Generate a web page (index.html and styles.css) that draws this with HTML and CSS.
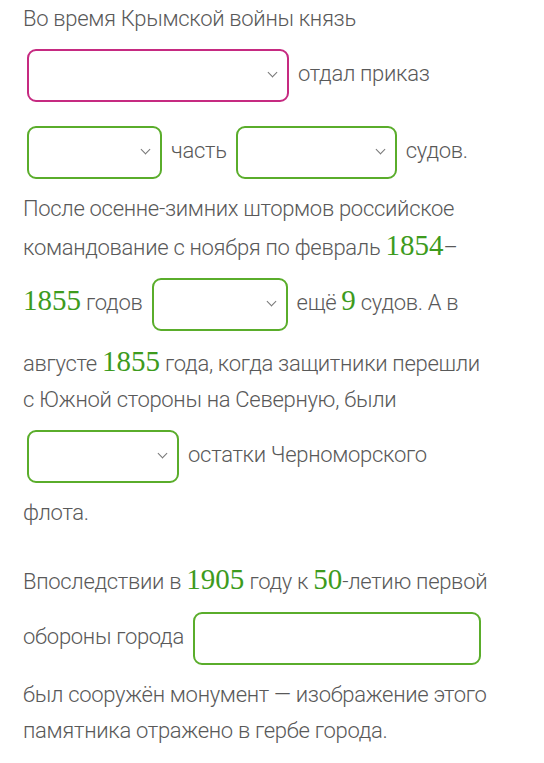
FILE: index.html
```html
<html>

<head>
  <meta content="text/html;charset=utf-8" http-equiv="Content-Type" />
  <link rel="stylesheet" href="styles.css">
</head>

<body>
  <div class="task">
    <p>
      Во время Крымской войны князь
      <span class="pick pick-wide active"><span class="caret"></span></span>
      отдал приказ
      <span class="pick pick-sm"><span class="caret"></span></span>
      часть
      <span class="pick pick-md"><span class="caret"></span></span>
      судов.
      После осенне-зимних штормов российское командование с ноября по февраль <span class="num">1854</span>–<span class="num">1855</span> годов
      <span class="pick pick-sm2"><span class="caret"></span></span>
      ещё <span class="num">9</span> судов. А в августе <span class="num">1855</span> года, когда защитники перешли с&nbsp;Южной стороны на Северную, были
      <span class="pick pick-sm3"><span class="caret"></span></span>
      остатки Черноморского флота.
    </p>

    <p>
      Впоследствии в <span class="num">1905</span> году к <span class="num">50</span>-летию первой обороны города
      <span class="field"></span>
      был сооружён монумент — изображение этого памятника отражено в гербе города.
    </p>
  </div>
</body>

</html>
```

FILE: styles.css
```css
html {
  margin: 0;
  font-family: "Roboto", "Liberation Sans", sans-serif;
  font-weight: 300;
  font-size: 22px;
  line-height: 36px;
  letter-spacing: -0.3px;
  color: #595959;
}

body {
  margin: 0;
  background: #fff;
}

.task {
  width: 473px;
  padding: 1px 0 0 23px;
}

p {
  margin: 0 0 30px 0;
}

.num {
  font-family: "Liberation Serif", "DejaVu Serif", serif;
  font-weight: 400;
  font-size: 29px;
  letter-spacing: 0;
  color: #3d9b1d;
}

.pick,
.field {
  display: inline-block;
  box-sizing: border-box;
  position: relative;
  height: 53px;
  margin: 12px 4px 12px 4px;
  vertical-align: middle;
  border: 2px solid #5aad2b;
  border-radius: 9px;
  background: #fff;
}

.pick.active {
  border-color: #c62a81;
}

.pick-wide { width: 262px; }
.pick-sm { width: 135px; }
.pick-md { width: 161px; }
.pick-sm2 { width: 136px; }
.pick-sm3 { width: 152px; }
.field { width: 288px; }

/* chevron drawn from two borders of a rotated square */
.caret {
  position: absolute;
  right: 11px;
  top: 18px;
  width: 6px;
  height: 6px;
  border-right: 1px solid #777;
  border-bottom: 1px solid #777;
  transform: rotate(45deg);
}
```
